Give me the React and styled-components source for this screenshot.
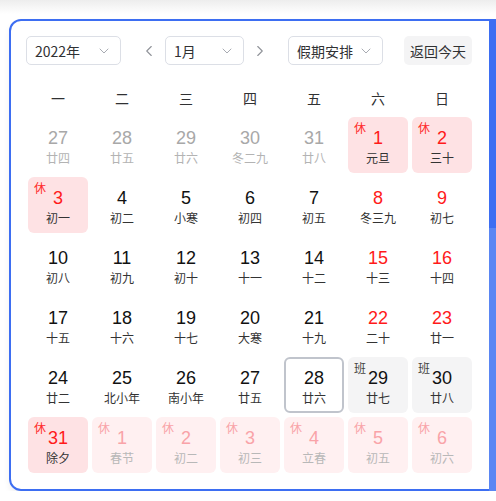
import React from "react";
import styled, { createGlobalStyle } from "styled-components";
import { ChevronDown, ChevronLeft, ChevronRight } from "lucide-react";

const GlobalStyle = createGlobalStyle`
  html, body {
    margin: 0;
    padding: 0;
    background: linear-gradient(#ededed, #ffffff 14px) no-repeat, #fff;
    font-family: "Liberation Sans", "Noto Sans CJK SC", sans-serif;
    overflow: hidden;
  }
`;

const Page = styled.div`
  padding: 19px 0 0 9px;
`;

const Panel = styled.div`
  position: relative;
  box-sizing: border-box;
  width: 487px;
  height: 472px;
  border: 2px solid #3d6ef2;
  border-right-width: 7px;
  border-radius: 12px 0 0 12px;
  background: #fff;
  box-shadow: 0 4px 6px rgba(0, 0, 0, 0.06);
  padding: 15px 15px 0 15px;

  &::after {
    content: "";
    position: absolute;
    right: -7px;
    top: 207px;
    bottom: -2px;
    width: 7px;
    background: #5a86f3;
  }
`;

const Toolbar = styled.div`
  display: flex;
  align-items: center;
  height: 29px;
  font-family: "Noto Sans CJK SC", sans-serif;
`;

const Select = styled.div`
  box-sizing: border-box;
  width: ${(p) => p.$w}px;
  height: 29px;
  border: 1px solid #dcdfe6;
  border-radius: 5px;
  display: flex;
  align-items: center;
  justify-content: space-between;
  padding: 0 8px 0 8px;
  font-size: 14px;
  color: #303133;
`;

const Arrow = styled.div`
  width: 44px;
  display: flex;
  justify-content: ${(p) => (p.$side === "left" ? "flex-end" : "flex-start")};
  padding: ${(p) => (p.$side === "left" ? "0 7px 0 0" : "0 0 0 7px")};
  box-sizing: border-box;
  color: #909399;
`;

const TodayButton = styled.div`
  margin-left: 21px;
  width: 68px;
  height: 29px;
  border-radius: 5px;
  background: #f4f4f5;
  display: flex;
  align-items: center;
  justify-content: center;
  font-size: 14px;
  color: #303133;
`;

const WeekRow = styled.div`
  display: grid;
  grid-template-columns: repeat(7, 60px);
  column-gap: 4px;
  margin: 17px 0 3px 2px;
  height: 32px;
  align-items: center;
`;

const WeekName = styled.div`
  text-align: center;
  font-size: 14px;
  color: #303133;
`;

const Grid = styled.div`
  display: grid;
  grid-template-columns: repeat(7, 60px);
  grid-auto-rows: 56px;
  gap: 4px;
  margin-left: 2px;
`;

const cellBg = {
  rest: "#fee2e4",
  restFaded: "#fff0f1",
  work: "#f4f4f5",
  plain: "transparent",
};

const Cell = styled.div`
  position: relative;
  box-sizing: border-box;
  border-radius: 6px;
  background: ${(p) => cellBg[p.$kind]};
  border: ${(p) => (p.$today ? "2px solid #c0c4cc" : "2px solid transparent")};
  display: flex;
  flex-direction: column;
  align-items: center;
  padding-top: 8px;
`;

const numColor = {
  prev: "#a8a8a8",
  normal: "#111",
  red: "#ff1a1a",
  faded: "#f9a3a8",
};

const Num = styled.div`
  font-size: 18px;
  line-height: 22px;
  color: ${(p) => numColor[p.$tone]};
`;

const lunarColor = {
  prev: "#b3b3b3",
  normal: "#333",
  red: "#333",
  faded: "#b8b8b8",
};

const Lunar = styled.div`
  font-family: "Noto Sans CJK SC", sans-serif;
  font-size: 12px;
  line-height: 16px;
  margin-top: 1px;
  color: ${(p) => lunarColor[p.$tone]};
`;

const Badge = styled.span`
  position: absolute;
  left: 4px;
  top: 1px;
  font-family: "Noto Sans CJK SC", sans-serif;
  font-size: 12px;
  line-height: 16px;
  color: ${(p) => (p.$type === "work" ? "#444" : p.$faded ? "#f9a3a8" : "#ff2a2a")};
`;

const weeks = ["一", "二", "三", "四", "五", "六", "日"];

// d: day, l: lunar, t: tone, k: kind, b: badge
const days = [
  { d: 27, l: "廿四", t: "prev" },
  { d: 28, l: "廿五", t: "prev" },
  { d: 29, l: "廿六", t: "prev" },
  { d: 30, l: "冬二九", t: "prev" },
  { d: 31, l: "廿八", t: "prev" },
  { d: 1, l: "元旦", t: "red", k: "rest", b: "休" },
  { d: 2, l: "三十", t: "red", k: "rest", b: "休" },
  { d: 3, l: "初一", t: "red", k: "rest", b: "休" },
  { d: 4, l: "初二" },
  { d: 5, l: "小寒" },
  { d: 6, l: "初四" },
  { d: 7, l: "初五" },
  { d: 8, l: "冬三九", t: "red" },
  { d: 9, l: "初七", t: "red" },
  { d: 10, l: "初八" },
  { d: 11, l: "初九" },
  { d: 12, l: "初十" },
  { d: 13, l: "十一" },
  { d: 14, l: "十二" },
  { d: 15, l: "十三", t: "red" },
  { d: 16, l: "十四", t: "red" },
  { d: 17, l: "十五" },
  { d: 18, l: "十六" },
  { d: 19, l: "十七" },
  { d: 20, l: "大寒" },
  { d: 21, l: "十九" },
  { d: 22, l: "二十", t: "red" },
  { d: 23, l: "廿一", t: "red" },
  { d: 24, l: "廿二" },
  { d: 25, l: "北小年" },
  { d: 26, l: "南小年" },
  { d: 27, l: "廿五" },
  { d: 28, l: "廿六", today: true },
  { d: 29, l: "廿七", k: "work", b: "班" },
  { d: 30, l: "廿八", k: "work", b: "班" },
  { d: 31, l: "除夕", t: "red", k: "rest", b: "休" },
  { d: 1, l: "春节", t: "faded", k: "restFaded", b: "休" },
  { d: 2, l: "初二", t: "faded", k: "restFaded", b: "休" },
  { d: 3, l: "初三", t: "faded", k: "restFaded", b: "休" },
  { d: 4, l: "立春", t: "faded", k: "restFaded", b: "休" },
  { d: 5, l: "初五", t: "faded", k: "restFaded", b: "休" },
  { d: 6, l: "初六", t: "faded", k: "restFaded", b: "休" },
];

const App = () => {
  return (
    <Page>
      <GlobalStyle />
      <Panel>
        <Toolbar>
          <Select $w={95}>
            <span>2022年</span>
            <ChevronDown size={16} color="#a8abb2" strokeWidth={1.5} />
          </Select>
          <Arrow $side="left">
            <ChevronLeft size={18} strokeWidth={1.5} />
          </Arrow>
          <Select $w={79}>
            <span>1月</span>
            <ChevronDown size={16} color="#a8abb2" strokeWidth={1.5} />
          </Select>
          <Arrow $side="right">
            <ChevronRight size={18} strokeWidth={1.5} />
          </Arrow>
          <Select $w={95}>
            <span>假期安排</span>
            <ChevronDown size={16} color="#a8abb2" strokeWidth={1.5} />
          </Select>
          <TodayButton>返回今天</TodayButton>
        </Toolbar>
        <WeekRow>
          {weeks.map((w) => (
            <WeekName key={w}>{w}</WeekName>
          ))}
        </WeekRow>
        <Grid>
          {days.map((day, i) => {
            const tone = day.t || "normal";
            return (
              <Cell key={i} $kind={day.k || "plain"} $today={day.today}>
                {day.b && (
                  <Badge $type={day.k === "work" ? "work" : "rest"} $faded={tone === "faded"}>
                    {day.b}
                  </Badge>
                )}
                <Num $tone={tone}>{day.d}</Num>
                <Lunar $tone={tone}>{day.l}</Lunar>
              </Cell>
            );
          })}
        </Grid>
      </Panel>
    </Page>
  );
};

export default App;
